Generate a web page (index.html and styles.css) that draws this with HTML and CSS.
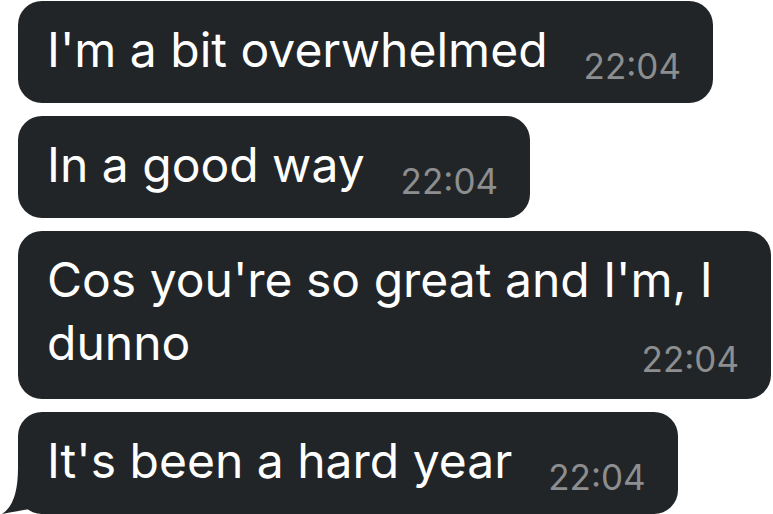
FILE: index.html
```html
<!DOCTYPE html>
<html lang="en">
<head>
<meta charset="utf-8">
<title>Chat</title>
<link rel="stylesheet" href="styles.css">
</head>
<body>
<div class="chat">
  <div class="bubble"><span class="text">I'm a bit overwhelmed</span><span class="time">22:04</span></div>
  <div class="bubble"><span class="text">In a good way</span><span class="time">22:04</span></div>
  <div class="bubble bubble-wrap"><span class="text">Cos you're so great and I'm, I dunno</span><span class="time">22:04</span></div>
  <div class="bubble bubble-tail"><span class="text">It's been a hard year</span><span class="time">22:04</span>
    <svg class="tail" width="60" height="54" viewBox="0 0 60 54" aria-hidden="true">
      <path d="M18 6 Q18 42 2 52 Q18 49 30 47 Q36 49 42 52 L60 52 L60 0 L18 0 Z" fill="#222527"/>
    </svg>
  </div>
</div>
</body>
</html>
```
FILE: styles.css
```css
html, body {
  margin: 0;
  padding: 0;
  background: #ffffff;
}

body {
  width: 773px;
  height: 514px;
  overflow: hidden;
}

.chat {
  display: flex;
  flex-direction: column;
  align-items: flex-start;
  gap: 13px;
  padding: 1px 0 0 18px;
}

.bubble {
  position: relative;
  isolation: isolate;
  box-sizing: border-box;
  max-width: 753px;
  background: #222527;
  color: #ffffff;
  border-radius: 24px;
  padding: 17px 32px 22px 29px;
  font-family: Inter, "Liberation Sans", sans-serif;
  font-size: 48px;
  line-height: 63px;
}

.bubble-wrap {
  padding-bottom: 25px;
}

.time {
  float: right;
  margin: 34px 0 0 36px;
  font-size: 35px;
  line-height: 29px;
  color: #8c8e90;
}

.tail {
  position: absolute;
  z-index: -1;
  left: -18px;
  bottom: -2px;
  display: block;
}
```
